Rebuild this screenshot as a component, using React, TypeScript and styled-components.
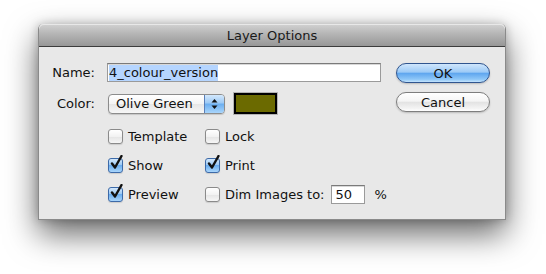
import styled, { createGlobalStyle } from 'styled-components';

const GlobalStyle = createGlobalStyle`
  html, body {
    margin: 0;
    background: #ffffff;
  }
  body {
    font-family: 'DejaVu Sans', 'Liberation Sans', sans-serif;
    font-size: 13px;
    color: #111;
  }
`;

const Page = styled.div`
  padding: 24px 0 0 38px;
  height: 274px;
  box-sizing: border-box;
`;

const Window = styled.div`
  width: 468px;
  border: 1px solid #8a8a8a;
  border-top: none;
  border-radius: 5px 5px 0 0;
  box-sizing: border-box;
  box-shadow: 0 14px 32px rgba(0, 0, 0, 0.6), 0 0 10px rgba(0, 0, 0, 0.22);
`;

const TitleBar = styled.div`
  height: 22px;
  border-radius: 5px 5px 0 0;
  background: linear-gradient(#d2d2d2, #b8b8b8 40%, #979797);
  border-bottom: 1px solid #3c3c3c;
  display: flex;
  align-items: center;
  justify-content: center;
  color: #1a1a1a;
  box-shadow: inset 0 1px 0 #e8e8e8;
`;

const Body = styled.div`
  height: 172px;
  background: #e8e8e8;
  display: flex;
  padding-top: 16px;
  box-sizing: border-box;
`;

const Fields = styled.div`
  display: flex;
  flex-direction: column;
`;

const FieldRow = styled.div<{ $top?: number }>`
  display: flex;
  align-items: center;
  margin-top: ${(p) => p.$top ?? 0}px;
`;

const Label = styled.div`
  width: 56px;
  text-align: right;
  margin-right: 12px;
`;

const TextField = styled.div<{ $width: number }>`
  width: ${(p) => p.$width}px;
  height: 19px;
  box-sizing: border-box;
  background: #fff;
  border: 1px solid #9a9a9a;
  border-top-color: #7a7a7a;
  box-shadow: inset 0 1px 0 #d8d8d8;
  display: flex;
  align-items: center;
  padding-left: 1px;
`;

const Selected = styled.span`
  background: #b5d5ff;
  line-height: 16px;
`;

const Popup = styled.div`
  margin-left: 1px;
  width: 117px;
  height: 20px;
  box-sizing: border-box;
  border: 1px solid #8c8c8c;
  border-radius: 4px;
  background: linear-gradient(#ffffff, #f4f4f4 50%, #e6e6e6 51%, #f7f7f7);
  display: flex;
  align-items: center;
  overflow: hidden;
  box-shadow: 0 1px 1px rgba(0, 0, 0, 0.15);
`;

const PopupText = styled.span`
  flex: 1;
  padding-left: 7px;
`;

const Stepper = styled.div`
  width: 19px;
  height: 100%;
  border-left: 1px solid #5a7fb8;
  background: linear-gradient(#d3e8fc, #9cc9f5 45%, #6baef0 50%, #a9d5fb);
  display: flex;
  align-items: center;
  justify-content: center;
`;

const Swatch = styled.div`
  margin-left: 9px;
  width: 43px;
  height: 21px;
  box-sizing: border-box;
  border: 2px solid #000;
  outline: 1px solid #b4b4b4;
  background: #6b6a00;
`;

const CheckGrid = styled.div`
  margin: 12px 0 0 69px;
  display: grid;
  grid-template-columns: 97px auto;
  grid-auto-rows: 20px;
  row-gap: 9px;
`;

const CheckItem = styled.label`
  display: flex;
  align-items: center;
  gap: 5px;
`;

const Box = styled.span<{ $checked?: boolean }>`
  position: relative;
  width: 13px;
  height: 13px;
  border: 1px solid ${(p) => (p.$checked ? '#3d6aa8' : '#8a8a8a')};
  border-radius: 3px;
  background: ${(p) =>
    p.$checked
      ? 'linear-gradient(#d3e8fc, #9cc9f5 45%, #6baef0 50%, #a9d5fb)'
      : 'linear-gradient(#ffffff, #f2f2f2 50%, #e4e4e4 51%, #f6f6f6)'};
  box-shadow: 0 1px 1px rgba(0, 0, 0, 0.12);
  flex: none;
`;

const Tick = styled.svg`
  position: absolute;
  left: 1px;
  top: -4px;
`;

const SmallField = styled(TextField)`
  margin-left: 7px;
  padding-left: 3px;
`;

const Percent = styled.span`
  margin-left: 9px;
`;

const Buttons = styled.div`
  margin-left: auto;
  margin-right: 15px;
  display: flex;
  flex-direction: column;
  gap: 9px;
`;

const Button = styled.div<{ $primary?: boolean }>`
  width: 94px;
  height: 20px;
  box-sizing: border-box;
  border-radius: 10px;
  display: flex;
  align-items: center;
  justify-content: center;
  border: 1px solid ${(p) => (p.$primary ? '#30558f' : '#7e7e7e')};
  background: ${(p) =>
    p.$primary
      ? 'linear-gradient(#d0e6fc, #9ccaf6 45%, #5fa6ef 52%, #8ec7f8 85%, #c4e3fc)'
      : 'linear-gradient(#ffffff, #f5f5f5 45%, #e3e3e3 52%, #f3f3f3 85%, #ffffff)'};
  box-shadow: 0 1px 2px rgba(0, 0, 0, 0.2);
`;

const Check = ({ label, checked }: { label: string; checked?: boolean }) => (
  <CheckItem>
    <Box $checked={checked}>
      {checked && (
        <Tick width="13" height="15" viewBox="0 0 13 15">
          <path d="M2 8.5 L5 12.5 L11.5 1" fill="none" stroke="#111" strokeWidth="2.4" strokeLinecap="round" strokeLinejoin="round" />
        </Tick>
      )}
    </Box>
    {label}
  </CheckItem>
);

export default function App() {
  return (
    <>
      <GlobalStyle />
      <Page>
        <Window>
          <TitleBar>Layer Options</TitleBar>
          <Body>
            <Fields>
              <FieldRow>
                <Label>Name:</Label>
                <TextField $width={274}>
                  <Selected>4_colour_version</Selected>
                </TextField>
              </FieldRow>
              <FieldRow $top={11}>
                <Label>Color:</Label>
                <Popup>
                  <PopupText>Olive Green</PopupText>
                  <Stepper>
                    <svg width="7" height="12" viewBox="0 0 7 12">
                      <path d="M3.5 1 L6.5 4.5 L0.5 4.5 Z" fill="#111" />
                      <path d="M3.5 11 L6.5 7.5 L0.5 7.5 Z" fill="#111" />
                    </svg>
                  </Stepper>
                </Popup>
                <Swatch />
              </FieldRow>
              <CheckGrid>
                <Check label="Template" />
                <Check label="Lock" />
                <Check label="Show" checked />
                <Check label="Print" checked />
                <Check label="Preview" checked />
                <FieldRow>
                  <Check label="Dim Images to:" />
                  <SmallField $width={34}>50</SmallField>
                  <Percent>%</Percent>
                </FieldRow>
              </CheckGrid>
            </Fields>
            <Buttons>
              <Button $primary>OK</Button>
              <Button>Cancel</Button>
            </Buttons>
          </Body>
        </Window>
      </Page>
    </>
  );
}
